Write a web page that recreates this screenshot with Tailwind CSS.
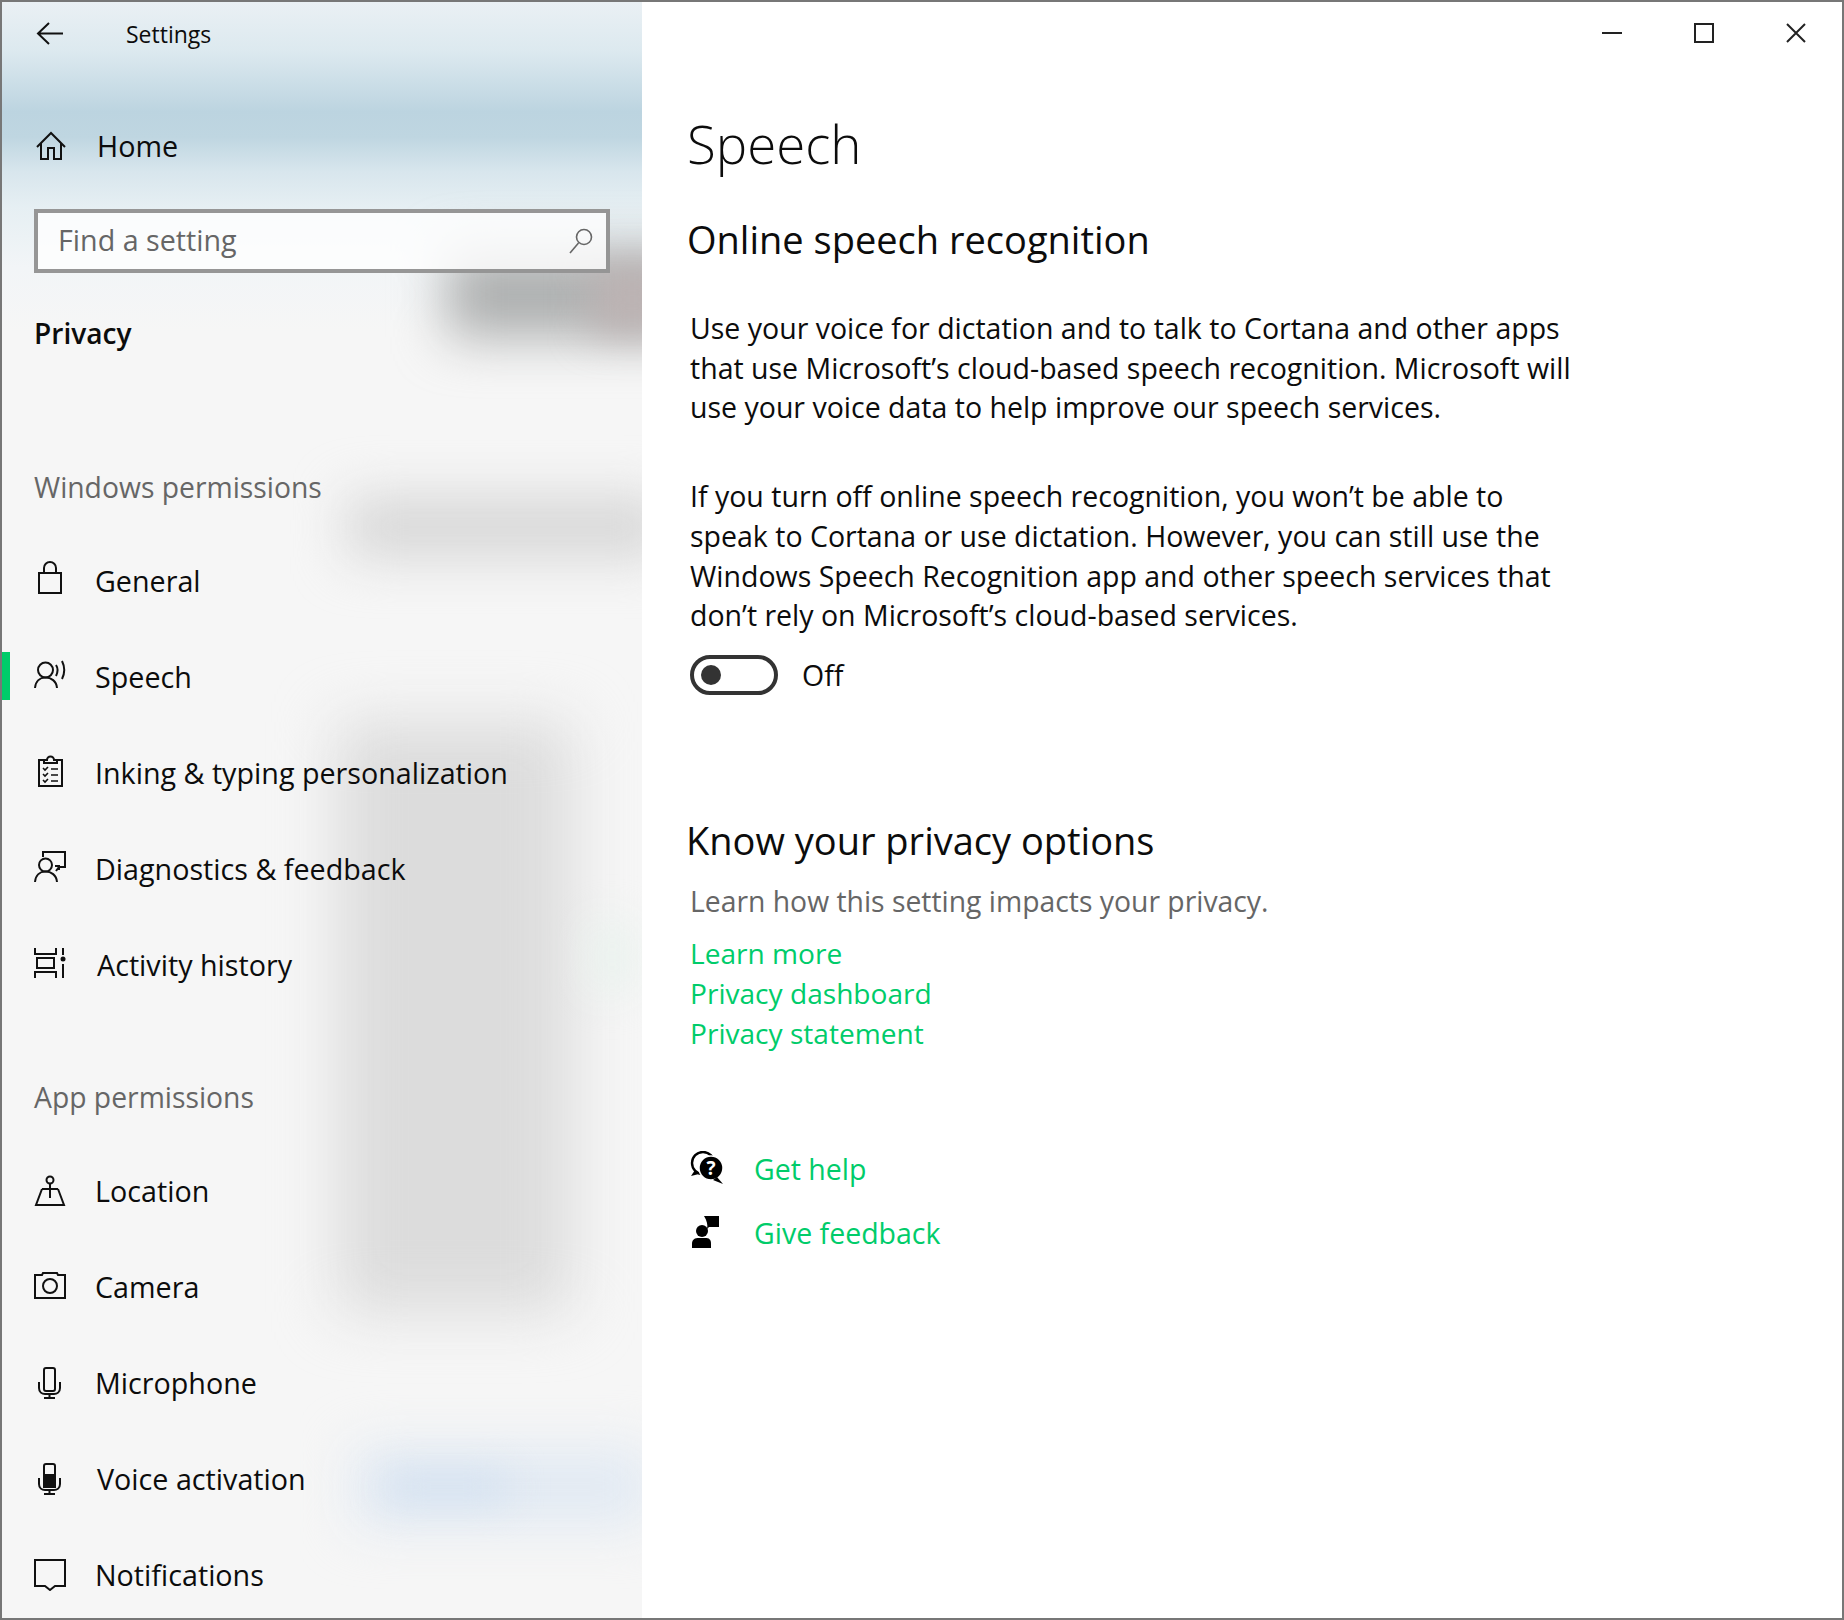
<!doctype html>
<html><head><meta charset="utf-8"><title>Settings</title>
<script src="https://cdn.jsdelivr.net/npm/@tailwindcss/browser@4"></script></head>
<body class="m-0 bg-white">
<div class="relative flex w-[1844px] h-[1620px] overflow-hidden border-2 border-[#777] bg-white text-[#0c0c0c] font-['Open_Sans','Noto_Sans',sans-serif] text-[28.5px]">
<aside class="relative w-[640px] h-full shrink-0 overflow-hidden text-[28.7px] bg-[linear-gradient(180deg,#eaf0f4_0px,#dce9ef_50px,#bcd4e0_110px,#bfd6e1_135px,#d8e6ed_170px,#e6eff3_205px,#f2f5f7_265px,#f6f6f6_330px)]">
  <div class="absolute left-[445px] top-[250px] w-[260px] h-[85px] bg-[#acaeae] blur-[26px]"></div>
  <div class="absolute left-[590px] top-[265px] w-[80px] h-[65px] bg-[#bdb3b3] blur-[20px]"></div>
  <div class="absolute left-[345px] top-[495px] w-[320px] h-[60px] bg-[#d6d6d6] blur-[26px]"></div>
  <div class="absolute left-[335px] top-[720px] w-[235px] h-[590px] bg-[#dcdcdc] blur-[30px]"></div>
  <div class="absolute left-[590px] top-[920px] w-[40px] h-[70px] bg-[#e9f2ed] blur-[20px]"></div>
  <div class="absolute left-[350px] top-[1445px] w-[300px] h-[80px] bg-[#e2eaf3] blur-[26px]"></div>
  <div class="absolute left-[385px] top-[1470px] w-[120px] h-[30px] bg-[#d5e2f1] blur-[18px]"></div>
  <div class="relative flex flex-col">
    <div class="flex items-center h-[64px] pl-[34px] gap-[62px] text-[23px]">
      <svg class="w-[28px] h-[24px]" viewBox="0 0 28 24" fill="none" stroke="#111" stroke-width="2"><path d="M27 11.5H2M13 1 2 11.5 13 22"/></svg>
      <span>Settings</span>
    </div>
    <div class="flex items-center h-[84px] mt-[38px] pl-[34px] gap-[31px]">
      <svg class="w-[30px] h-[30px]" viewBox="0 0 30 30" fill="none" stroke="#111" stroke-width="2"><path d="M1 16 15 2l14 14M5 12v16h7V17h6v11h7V12"/></svg>
      <span>Home</span>
    </div>
    <div class="flex items-center justify-between ml-[32px] mt-[21px] w-[576px] h-[64px] border-[4px] border-[#8b8b8b]/90 bg-white/80 pl-[20px] pr-[13px] text-[#666]">
      <span class="-mt-[2px]">Find a setting</span>
      <svg class="w-[24px] h-[26px]" viewBox="0 0 24 26" fill="none" stroke="#666" stroke-width="1.6"><circle cx="15" cy="9" r="7.5"/><path d="M9.500 15 1 25"/></svg>
    </div>
    <div class="ml-[32px] mt-[40px] font-semibold text-[28.1px] leading-[40px]">Privacy</div>
    <div class="ml-[32px] mt-[114px] text-[28.3px] leading-[40px] text-[#666]">Windows permissions</div>
    <nav class="mt-[26px]">
      <div class="flex items-center h-[96px] pl-[32px] gap-[29px]"><svg class="w-[32px] h-[32px] -mt-[4px] overflow-visible" viewBox="0 0 32 32" fill="none" stroke="#111" stroke-width="2"><path d="M5 10h22v20H5zM10 10V5a6 6 0 0 1 12 0v5"/></svg><span>General</span></div>
      <div class="relative flex items-center h-[96px] pl-[32px] gap-[29px]"><div class="absolute left-0 top-[23px] w-[8px] h-[48px] bg-[#00cc6a]"></div><svg class="w-[32px] h-[32px] -mt-[4px]" viewBox="0 0 32 32" fill="none" stroke="#111" stroke-width="2"><circle cx="11.5" cy="11" r="7.500"/><path d="M1 29c.5-7 5-10.500 10.500-10.500S22.500 22 23 29M22 6c2 3 2 7 0 11M28 2c3 6 3 12 0 18"/></svg><span>Speech</span></div>
      <div class="flex items-center h-[96px] pl-[32px] gap-[29px]"><svg class="w-[32px] h-[32px] -mt-[4px]" viewBox="0 0 32 32" fill="none" stroke="#111" stroke-width="2"><path d="M10 5H5v26h23V5h-5M10 8V5h3a3 3 0 0 1 7 0h3v3z"/><path d="m9 13 2 2 3-3M9 19l2 2 3-3M9 25l2 2 3-3M17 14h7M17 20h7M17 26h7" stroke-width="1.600"/></svg><span>Inking &amp; typing personalization</span></div>
      <div class="flex items-center h-[96px] pl-[32px] gap-[29px]"><svg class="w-[32px] h-[32px] -mt-[4px]" viewBox="0 0 32 32" fill="none" stroke="#111" stroke-width="2"><path d="M9 6V1h22v15h-6l-3 4"/><path d="M21 15h4v4"/><circle cx="11.500" cy="14" r="6.500"/><path d="M1 31c.5-7 5-10.500 10.500-10.500S22.500 24 23 31"/></svg><span>Diagnostics &amp; feedback</span></div>
      <div class="flex items-center h-[96px] pl-[32px] gap-[31px]"><svg class="w-[32px] h-[32px] -mt-[4px]" viewBox="0 0 32 32" fill="none" stroke="#111" stroke-width="2"><path d="M1 1v6h21V1M3 11h17v10H3zM1 31v-6h21v6M29 1v7M29 17v14"/><circle cx="29" cy="12" r="2.500" fill="#111" stroke="none"/></svg><span>Activity history</span></div>
    </nav>
    <div class="ml-[32px] mt-[64px] text-[28.3px] leading-[40px] text-[#666]">App permissions</div>
    <nav class="mt-[26px]">
      <div class="flex items-center h-[96px] pl-[32px] gap-[29px]"><svg class="w-[32px] h-[32px]" viewBox="0 0 32 32" fill="none" stroke="#111" stroke-width="2"><circle cx="16" cy="5" r="3.500"/><path d="M16 9v14M8 14h16M8 14 2 30h28l-6-16"/></svg><span>Location</span></div>
      <div class="flex items-center h-[96px] pl-[32px] gap-[29px]"><svg class="w-[32px] h-[32px] -mt-[2px]" viewBox="0 0 32 32" fill="none" stroke="#111" stroke-width="2"><path d="M1 5h7l1-2h14l1 2h7v23H1z"/><circle cx="16" cy="16" r="7"/></svg><span>Camera</span></div>
      <div class="flex items-center h-[96px] pl-[32px] gap-[29px]"><svg class="w-[32px] h-[32px]" viewBox="0 0 32 32" fill="none" stroke="#111" stroke-width="2"><rect x="10" y="1" width="11" height="23" rx="2"/><path d="M5 15v6c0 4 3 6 6 6h9c3 0 6-2 6-6v-6M15.500 27v4M10 31h11"/></svg><span>Microphone</span></div>
      <div class="flex items-center h-[96px] pl-[32px] gap-[31px]"><svg class="w-[32px] h-[32px]" viewBox="0 0 32 32" fill="none" stroke="#111" stroke-width="2"><rect x="10" y="1" width="11" height="23" rx="2"/><path d="M10 12h11v12H10z" fill="#111"/><path d="M5 15v6c0 4 3 6 6 6h9c3 0 6-2 6-6v-6M15.500 27v4M10 31h11"/></svg><span>Voice activation</span></div>
      <div class="flex items-center h-[96px] pl-[32px] gap-[29px]"><svg class="w-[32px] h-[32px]" viewBox="0 0 32 32" fill="none" stroke="#111" stroke-width="2"><path d="M1 1h30v26H21l-5 4-5-4H1z"/></svg><span>Notifications</span></div>
    </nav>
  </div>
</aside>
<main class="relative flex-1 pl-[48px]">
  <div class="absolute right-[36px] top-[21px] flex items-center gap-[72px]">
    <svg class="w-[20px] h-[20px]" viewBox="0 0 20 20" stroke="#222" stroke-width="2"><path d="M0 10h20"/></svg>
    <svg class="w-[20px] h-[20px]" viewBox="0 0 20 20" fill="none" stroke="#222" stroke-width="2"><path d="M1 1h18v18H1z"/></svg>
    <svg class="w-[20px] h-[20px]" viewBox="0 0 20 20" fill="none" stroke="#222" stroke-width="2"><path d="m1 1 18 18M19 1 1 19"/></svg>
  </div>
  <h1 class="mt-[107px] ml-[-3px] text-[52.8px] leading-[70px] font-light">Speech</h1>
  <h2 class="mt-[32px] ml-[-3px] text-[38px] leading-[56px]">Online speech recognition</h2>
  <div class="mt-[42px] w-[890px] leading-[39.700px]">
    <p>Use your voice for dictation and to talk to Cortana and other apps that use Microsoft’s cloud-based speech recognition. Microsoft will use your voice data to help improve our speech services.</p>
    <p class="mt-[49px]">If you turn off online speech recognition, you won’t be able to speak to Cortana or use dictation. However, you can still use the Windows Speech Recognition app and other speech services that don’t rely on Microsoft’s cloud-based services.</p>
  </div>
  <div class="flex items-center mt-[18px] gap-[24px]">
    <div class="flex items-center w-[88px] h-[40px] rounded-full border-[4px] border-[#333] pl-[7px]"><div class="w-[20px] h-[20px] rounded-full bg-[#333]"></div></div>
    <span>Off</span>
  </div>
  <h2 class="mt-[115px] ml-[-4px] text-[38px] leading-[56px]">Know your privacy options</h2>
  <p class="mt-[13px] text-[28.33px] leading-[40px] text-[#666]">Learn how this setting impacts your privacy.</p>
  <div class="mt-[12px] flex flex-col text-[#00cc6a] text-[28.1px] leading-[40px]">
    <a>Learn more</a><a>Privacy dashboard</a><a>Privacy statement</a>
  </div>
  <div class="mt-[85px] flex items-center gap-[30px] h-[64px] text-[#00cc6a]">
    <svg class="w-[34px] h-[34px] shrink-0 -mt-[4px]" viewBox="0 0 34 34"><circle cx="13" cy="12" r="11" fill="none" stroke="#000" stroke-width="2.400"/><path d="M5 19 1 25l8-2z" fill="#000"/><circle cx="21" cy="17" r="12" fill="#000" stroke="#fff" stroke-width="1.500"/><path d="m27 26 6 7-10-4z" fill="#000"/><text x="21" y="24" text-anchor="middle" font-size="19" font-weight="700" fill="#fff" font-family="Open Sans">?</text></svg>
    <span>Get help</span>
  </div>
  <div class="flex items-center gap-[30px] h-[64px] text-[#00cc6a]">
    <svg class="w-[34px] h-[34px] shrink-0 -mt-[4px]" viewBox="0 0 34 34"><circle cx="12" cy="16" r="6" fill="#000"/><path d="M2 33v-4c0-5 3-6 7-6h6c4 0 6 1 6 6v4z" fill="#000"/><path d="M14 1h15v11H19l-2 2c1-4 0-8-3-13z" fill="#000"/></svg>
    <span>Give feedback</span>
  </div>
</main>
<div class="absolute left-[-2px] top-[50px] w-[2px] h-[100px] bg-[#2f5f70]"></div>
<div class="absolute right-[-2px] top-[50px] w-[2px] h-[100px] bg-[#2f5f70]"></div>
</div>
</body></html>
